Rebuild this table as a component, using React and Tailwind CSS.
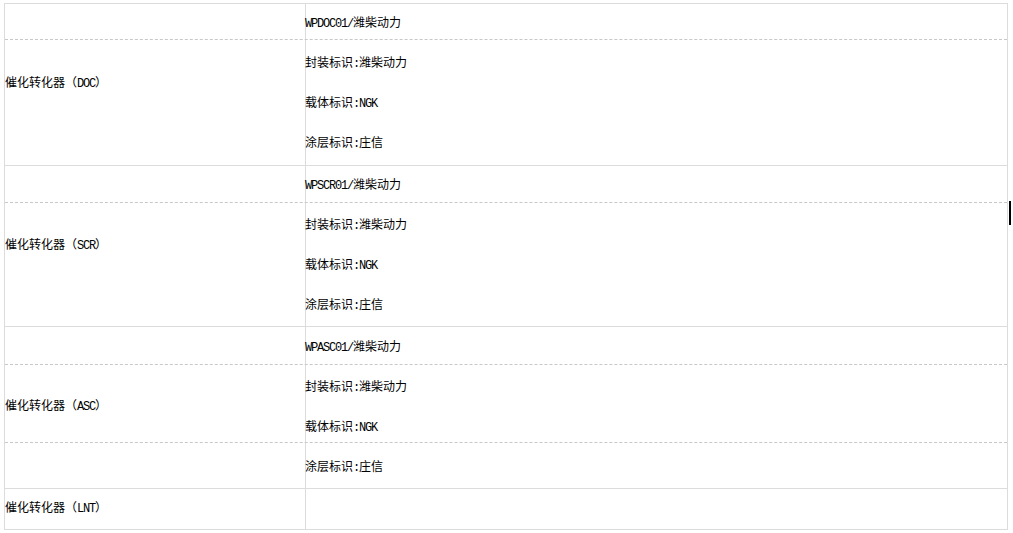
const cjk = "font-['Noto_Sans_CJK_SC',sans-serif] text-[12px] text-black leading-none";
const mono = "font-['Liberation_Mono','Noto_Sans_CJK_SC',monospace] text-[12px] tracking-[-1.2px]";

// split a line into latin runs (6px half-width) and CJK runs
function Txt({ children }) {
  const parts = children.split(/([A-Za-z0-9:/]+)/).filter(Boolean);
  return (
    <span className={cjk}>
      {parts.map((p, i) =>
        /^[A-Za-z0-9:/]+$/.test(p) ? (
          <span key={i} className={mono}>{p}</span>
        ) : (
          <span key={i}>{p}</span>
        )
      )}
    </span>
  );
}

const rowStart = ['row-start-1', 'row-start-2', 'row-start-3'];
const rowSpan = ['row-span-1', 'row-span-1', 'row-span-2', 'row-span-3'];

const groups = [
  {
    label: '催化转化器（DOC）',
    rows: [
      { h: 'h-[35px]', pt: 'pt-0', lines: ['WPDOC01/潍柴动力'], line: 'h-[35px]', last: false },
      { h: 'h-[125px]', pt: 'pt-[2px]', lines: ['封装标识:潍柴动力', '载体标识:NGK', '涂层标识:庄信'], line: 'h-[40px]', last: true },
    ],
  },
  {
    label: '催化转化器（SCR）',
    rows: [
      { h: 'h-[36px]', pt: 'pt-0', lines: ['WPSCR01/潍柴动力'], line: 'h-[36px]', last: false },
      { h: 'h-[123px]', pt: 'pt-[1px]', lines: ['封装标识:潍柴动力', '载体标识:NGK', '涂层标识:庄信'], line: 'h-[40px]', last: true },
    ],
  },
  {
    label: '催化转化器（ASC）',
    rows: [
      { h: 'h-[37px]', pt: 'pt-0', lines: ['WPASC01/潍柴动力'], line: 'h-[37px]', last: false },
      { h: 'h-[77px]', pt: 'pt-[1px]', lines: ['封装标识:潍柴动力', '载体标识:NGK'], line: 'h-[40px]', last: false },
      { h: 'h-[45px]', pt: 'pt-[3px]', lines: ['涂层标识:庄信'], line: 'h-[40px]', last: true },
    ],
  },
  {
    label: '催化转化器（LNT）',
    rows: [{ h: 'h-[40px]', pt: 'pt-0', lines: [], line: 'h-[40px]', last: true }],
  },
];

function Group({ label, rows }) {
  return (
    <div className="grid grid-cols-[300px_1fr]">
      {rows.map((r, i) => (
        <div
          key={'d' + i}
          className={`col-start-1 col-span-2 ${rowStart[i]} border-b ${
            r.last ? 'border-solid border-[#dcdcdc]' : 'border-dashed border-[#c8c8c8]'
          }`}
        />
      ))}
      <div className={`col-start-1 row-start-1 ${rowSpan[rows.length]} flex items-center pb-[4px]`}>
        <Txt>{label}</Txt>
      </div>
      {rows.map((r, i) => (
        <div
          key={'r' + i}
          className={`col-start-2 ${rowStart[i]} ${r.h} ${r.pt} border-l border-[#dcdcdc] mb-px overflow-visible`}
        >
          {r.lines.map((l) => (
            <div key={l} className={`${r.line} pt-[2px] flex items-center -ml-px`}>
              <Txt>{l}</Txt>
            </div>
          ))}
        </div>
      ))}
    </div>
  );
}

export default function App() {
  return (
    <div className="relative w-[1013px] h-[533px] bg-white overflow-hidden">
      <div className="pt-[3px] pl-[4px] pr-[5px]">
        <div className="border-t border-l border-r border-[#dcdcdc]">
          {groups.map((g) => (
            <Group key={g.label} {...g} />
          ))}
        </div>
      </div>
      {/* caret */}
      <div className="absolute left-[1009px] top-[201px] w-[2px] h-[24px] bg-black" />
    </div>
  );
}
